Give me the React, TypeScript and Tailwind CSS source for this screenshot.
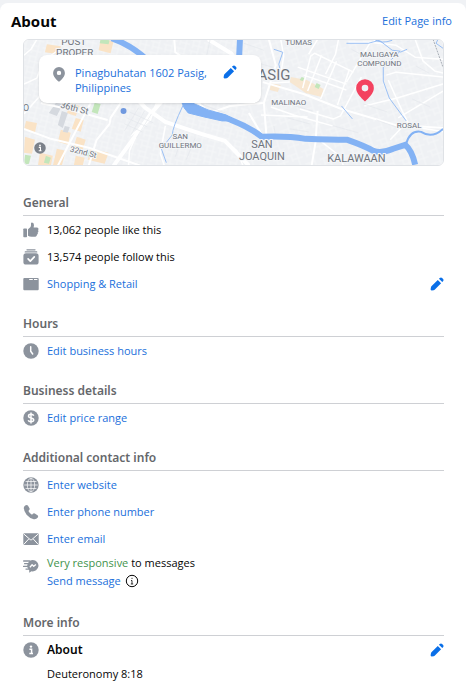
import React from 'react';

// --- Icons ---
interface IconProps {
    className?: string;
}

const PencilIcon: React.FC<IconProps> = ({ className }) => (
    <svg viewBox="0 0 16 16" className={className} fill="currentColor" aria-hidden="true">
        <path d="M8.900 3.300 12.700 7.100 5.600 14.200Q5 14.800 4.200 15L2 15.400Q.6 15.500.7 14.100L1.100 11.800Q1.300 11 1.900 10.400Z" />
        <path d="M10.200 2 11.200 1.100Q12.600-.1 13.900 1.200L14.900 2.200Q16.100 3.500 14.900 4.900L14 5.800Z" />
    </svg>
);

const PinIcon: React.FC<IconProps> = ({ className }) => (
    <svg viewBox="0 0 12 15" className={className} fill="currentColor" aria-hidden="true">
        <path fillRule="evenodd" d="M6 0a5.9 5.9 0 0 0-5.9 5.9C.1 9.4 3.200 12.300 6 14.800 8.800 12.300 11.900 9.400 11.900 5.900A5.900 5.900 0 0 0 6 0Zm0 3.700a2.200 2.200 0 1 1 0 4.400 2.200 2.200 0 0 1 0-4.400Z" />
    </svg>
);

const InfoIcon: React.FC<IconProps> = ({ className }) => (
    <svg viewBox="0 0 16 16" className={className} aria-hidden="true">
        <circle cx="8" cy="8" r="7.700" fill="currentColor" />
        <circle cx="8" cy="4.600" r="1.200" fill="#fff" />
        <path d="M6.400 7.200h2.200v4.200M6.300 11.600h3.700" fill="none" stroke="#fff" strokeWidth="1.500" />
    </svg>
);

const InfoOutlineIcon: React.FC<IconProps> = ({ className }) => (
    <svg viewBox="0 0 14 14" className={className} fill="none" stroke="currentColor" aria-hidden="true">
        <circle cx="7" cy="7" r="5.700" strokeWidth="1" />
        <path d="M7 3.800v1.200M6 6.500h1v3.500M5.800 10h2.400" strokeWidth=".8" />
    </svg>
);

const LikeIcon: React.FC<IconProps> = ({ className }) => (
    <svg viewBox="0 0 16 16" className={className} fill="currentColor" aria-hidden="true">
        <path d="M1 6.500h2.300q.7 0 .7.700v7.300q0 .7-.7.700H1q-.7 0-.7-.7V7.200q0-.7.700-.7Z" />
        <path d="M5 7.300 7.300 5.200Q8 4.500 8 3.300V1.600Q8 .6 9 .6 11 .8 11 3.200L10.600 5.400H14q1.500.1 1.500 1.500 0 .8-.6 1.200.6.500.5 1.300-.1.800-.8 1.200.4.500.2 1.200-.2.700-.9 1 .2 1.700-1.500 1.900H8.500Q6.500 14.600 5 13.700Z" />
    </svg>
);

const FollowIcon: React.FC<IconProps> = ({ className }) => (
    <svg viewBox="0 0 16 16" className={className} aria-hidden="true">
        <path d="M4 .8h8M2.300 2.900h11.400" stroke="currentColor" strokeWidth="1.300" strokeLinecap="round" />
        <rect x=".4" y="4.300" width="15.200" height="11.300" rx="2.600" fill="currentColor" />
        <path d="m5.100 9.900 2.200 2.200 4-4.200" fill="none" stroke="#fff" strokeWidth="1.700" strokeLinecap="round" strokeLinejoin="round" />
    </svg>
);

const CategoryIcon: React.FC<IconProps> = ({ className }) => (
    <svg viewBox="0 0 16 16" className={className} aria-hidden="true">
        <rect x=".3" y="1.900" width="15.400" height="12.400" rx="1" fill="currentColor" />
        <path d="M6.200 3.500h3.600M11 3.500h3.400" stroke="#fff" strokeWidth="1" />
    </svg>
);

const ClockIcon: React.FC<IconProps> = ({ className }) => (
    <svg viewBox="0 0 16 16" className={className} aria-hidden="true">
        <circle cx="8" cy="8" r="7.700" fill="currentColor" />
        <path d="M7.700 3.800v4.400l2 2.800" fill="none" stroke="#fff" strokeWidth="1.500" strokeLinecap="round" />
    </svg>
);

const DollarIcon: React.FC<IconProps> = ({ className }) => (
    <svg viewBox="0 0 16 16" className={className} aria-hidden="true">
        <circle cx="8" cy="8" r="7.700" fill="currentColor" />
        <path d="M10.700 5.700Q10.300 4.300 8 4.300 5.500 4.300 5.500 6 5.500 7.500 8 8q2.700.5 2.700 2.100 0 1.700-2.700 1.700-2.300 0-2.800-1.500M8 2.600v10.900" fill="none" stroke="#fff" strokeWidth="1.500" />
    </svg>
);

const GlobeIcon: React.FC<IconProps> = ({ className }) => (
    <svg viewBox="0 0 16 16" className={className} aria-hidden="true">
        <circle cx="8" cy="8" r="7.700" fill="currentColor" />
        <g fill="none" stroke="#fff" strokeWidth=".7">
            <path d="M8 1.200v13.600M1.200 8h13.600M2.600 4.500h10.800M2.600 11.500h10.800" />
            <ellipse cx="8" cy="8" rx="3.700" ry="6.800" />
        </g>
    </svg>
);

const PhoneIcon: React.FC<IconProps> = ({ className }) => (
    <svg viewBox="0 0 16 16" className={className} fill="currentColor" aria-hidden="true">
        <path d="M2.200 1.500Q3.800.4 4.900 1.600L6.500 4.300Q7 5.300 6.200 6.100L5.400 7Q6.600 9.500 9 10.700L9.900 9.800Q10.800 9 11.800 9.600L14.500 11.200Q15.600 12.200 14.800 13.500 13.200 15.700 10.700 15.200 6.700 14.200 3.600 10.700.7 6.900.8 3.700 1 2.300 2.200 1.500Z" />
    </svg>
);

const MailIcon: React.FC<IconProps> = ({ className }) => (
    <svg viewBox="0 0 16 16" className={className} aria-hidden="true">
        <rect x=".3" y="2.300" width="15.400" height="11.600" rx="1.200" fill="currentColor" />
        <path d="m.8 3 6.400 5.600q.8.700 1.600 0L15.200 3M.8 13.400l5-5.500M15.200 13.400l-5-5.500" fill="none" stroke="#fff" strokeWidth="1" />
    </svg>
);

const ResponsiveIcon: React.FC<IconProps> = ({ className }) => (
    <svg viewBox="0 0 16 16" className={className} aria-hidden="true">
        <path d="M9.800 2a5.900 5.700 0 1 1-1.300 11.300L6.200 14.700v-2.600A5.900 5.700 0 0 1 5 5.200Q6.500 2 9.800 2Z" fill="currentColor" />
        <path d="M.6 3h6M1.600 5.700h4M.6 8.400h4.200M3 11.100h3" stroke="currentColor" strokeWidth="1.300" strokeLinecap="round" />
        <path d="m6.900 9.200 2.200-2.400 1.600 1.500 2.200-1.900" fill="none" stroke="#fff" strokeWidth="1.300" strokeLinejoin="round" />
    </svg>
);

// --- Map of the neighbourhood ---
const LocationMap: React.FC = () => (
    <svg viewBox="23 39 421 127" preserveAspectRatio="xMidYMid slice" className="absolute inset-0 h-full w-full" role="img" aria-label="Map of Pinagbuhatan, Pasig">
        <defs>
            <pattern id="streets" width="13" height="11" patternUnits="userSpaceOnUse" patternTransform="rotate(14)">
                <path d="M0 3h9M9 0v11M3 3v8M3 8h10" stroke="#f6f7f9" strokeWidth=".8" fill="none" />
            </pattern>
            <pattern id="streetsEast" width="15" height="13" patternUnits="userSpaceOnUse" patternTransform="rotate(-18)">
                <path d="M0 4h10M10 0v13M4 4v7M4 9h11" stroke="#f6f7f9" strokeWidth=".8" fill="none" />
            </pattern>
        </defs>
        <rect x="23" y="39" width="421" height="127" fill="#eff1f4" />
        <rect x="23" y="39" width="225" height="127" fill="url(#streets)" />
        <rect x="248" y="39" width="196" height="127" fill="url(#streetsEast)" />

        {/* commercial blocks */}
        <g fill="#fae3c6">
            <path d="m100 39 13 2-3 12-12-3ZM46 44l14 2-2 8-14-2ZM25 121l11 2-2 10-11-3ZM24 137l10 3-3 14-8-1ZM70 103l9 3-4 10-9-3ZM75 118l8 2-3 12-9-3ZM60 130l10 3-3 12-10-3ZM76 137l9 3-4 13-9-3ZM39 153l13 3-2 10H37ZM56 149l9 2-4 15h-9ZM75 156l9 2-2 8h-9ZM90 149l18 4-4 11-17-4Z" />
            <path d="m291 77 16 3 17 9-2 8-16-4-16-11ZM271 83l10 2-3 7-8-2Z" opacity=".75" />
        </g>
        <g fill="#c3e6bb">
            <path d="m94 103 6 1-3 10-6-2ZM100 39l9 1-1 4-9-1ZM24 155l6 1-2 8-5 1ZM45 156l5 2-2 6-5-1ZM89 151l5 2-3 5-5-2ZM317 83l4 2-2 4-4-2ZM302 77l3 1-2 3-3-1Z" />
        </g>
        <path d="m55 103 7 1-6 12-8-3ZM61 111l6 2-5 15-5-3ZM64 126l5 1-2 6-5-1Z" fill="#d5d9df" />

        {/* streets */}
        <g fill="none" stroke="#fff" strokeLinejoin="round">
            <g strokeWidth="2">
                <path d="M23 129 50 139 88 148 140 166M40 103 71 110 107 120M90 103 72 137 57 166M120 103 110 118 109 124 96 140 88 166M174 39 175 52 184 58" />
                <path d="M132 94 145 108 165 122 201 134 225 141 249 166M168 94 151 113 140 129 113 166M208 39 231 53 240 65" strokeWidth="4" />
                <path d="M183 90 210 113 230 106 263 103M249 113 262 135M263 82 304 94 342 109 396 125 444 128" />
                <path d="M269 39 276 65 264 103 267 141M318 111 316 142 312 166" />
            </g>
            <g strokeWidth="1.500">
                <path d="M303 88 311 56 315 53 354 72M304 75 347 90M298 67 347 84M322 55 308 91M337 61 321 99M350 69 338 105M362 77 341 116 334 119 300 109" />
                <path d="M309 54 318 39M339 39 336 54 326 74M281 39 284 56 280 79M349 42 374 42 376 39M347 82 371 42 397 45 416 57 444 59" />
                <path d="M387 75 397 72 444 77M365 106 398 98 444 84M399 118 444 91M391 140 405 125 444 132" />
                <path d="M416 39 424 61 436 71 444 73M389 80 403 111 409 123M270 83 290 82M271 107 294 115 333 126M261 115 308 117M322 142 340 156 344 166M225 141 237 151 243 166" />
                <path d="M23 84 36 78 42 61 56 51 77 49M23 114 39 96M36 39 30 49 23 55M136 135 129 151 128 166M165 126 160 154 164 166M156 103 150 120 130 136" />
            </g>
        </g>
        <g fill="none" stroke="#e3e6ea" strokeWidth=".6">
            <path d="M129 112l24 11M126 118l21 9M124 124l18 8M144 111l-14 25M151 114l-15 24M138 108l-14 23M183 135l-8 22M195 138l-9 22M201 104l24 9M210 39l-4 19M244 43l20 7M251 61l22 6M282 102l31 9M288 118l22 6M334 126l25 7M364 104l24 8M377 120l22 8M413 99l18 8M417 66l13 7M352 49l13 7M290 129l19 3M274 126l2 11" />
        </g>
        <path d="M434 39 444 67" fill="none" stroke="#8b929b" strokeWidth=".7" strokeDasharray="2 1" />

        {/* river and creeks */}
        <g fill="none" stroke="#83b2f4">
            <path d="M111 38Q131 45 147 60 161 74 168 93M240 39 239 60Q236 83 240 94M204 114Q221 115 231 120 249 127 262 137 287 136 306 139 331 140 348 140 365 146 374 151 382 154 394 149L406 145Q413 151 416 165" strokeWidth="6" />
            <path d="M181 101 190 102 208 110 226 115 236 121 222 121 204 117 188 113 184 108Z" fill="#83b2f4" />
            <path d="M407 144Q411 130 422 132 433 139 444 129" strokeWidth="2" />
            <path d="M183 105Q172 128 172 135L161 149 166 163M274 49l9 3-4 12 1 4M375 39q7 5 18 1M347 43 369 43 380 40 393 50 401 51 384 67 384 81 390 98 407 121M401 52 408 49M439 39l-2 4 7 5M342 106l11 13" strokeWidth=".8" />
        </g>
        <circle cx="123" cy="111" r="3" fill="#7099df" />

        {/* place labels */}
        <g fontFamily="Roboto, sans-serif" fill="#6f747d" textAnchor="middle" stroke="#f4f6f8" strokeWidth="2" paintOrder="stroke">
            <text x="73" y="45" fontSize="10">POST</text>
            <text x="74" y="56" fontSize="10">PROPER</text>
            <g fontSize="9">
                <text x="25" y="111">O</text>
                <text x="73" y="111" transform="rotate(14 73 111)">36th St</text>
            </g>
            <text x="82" y="155" fontSize="8" transform="rotate(14 82 155)">32nd St</text>
            <g fontSize="8">
                <text x="299" y="45">TUMAS</text>
                <text x="380" y="57">MALIGAYA</text>
                <text x="380" y="66">COMPOUND</text>
                <text x="289" y="105">MALINAO</text>
                <text x="180" y="139">SAN</text>
                <text x="180" y="148">GUILLERMO</text>
                <text x="410" y="128">ROSAL</text>
            </g>
            <g fontSize="11">
                <text x="262" y="148">SAN</text>
                <text x="262" y="160">JOAQUIN</text>
                <text x="357" y="162">KALAWAAN</text>
            </g>
            <text x="270" y="80" fontSize="15">PASIG</text>
        </g>
    </svg>
);

// --- Section of the about card ---
interface SectionProps {
    title: string;
    children: React.ReactNode;
}

const Section: React.FC<SectionProps> = ({ title, children }) => (
    <section className="mb-4">
        <h3 className="h-6 border-b border-[#ced0d4] font-['Noto_Sans',sans-serif] text-[12px] leading-[22px] font-semibold text-[#65676b]">{title}</h3>
        {children}
    </section>
);

interface RowProps {
    icon: React.ReactNode;
    action?: React.ReactNode;
    children: React.ReactNode;
}

const Row: React.FC<RowProps> = ({ icon, action, children }) => (
    <div className="flex h-[27px] items-center gap-2">
        <span className="w-4 shrink-0 text-[#8c939d]">{icon}</span>
        <div className="grow">{children}</div>
        {action}
    </div>
);

const linkClass = 'text-[#216fdb] hover:underline';

const EditButton: React.FC<{ label: string }> = ({ label }) => (
    <button type="button" aria-label={label} className="shrink-0 cursor-pointer text-[#0a6fe8]">
        <PencilIcon className="h-3.5 w-3.5" />
    </button>
);

const App: React.FC = () => {
    return (
        <div className="min-h-screen bg-[#f0f2f5] pt-[3px] font-['Open_Sans','Noto_Sans',sans-serif] text-[11px] leading-[18px] text-[#050505]">
            <main className="min-h-[690px] rounded-t-lg bg-white">
                <header className="flex h-9 items-center justify-between pr-3.5 pl-[11px]">
                    <h2 className="text-[15px] font-bold">About</h2>
                    <a href="#page-info" className={linkClass}>Edit Page info</a>
                </header>

                <div className="pr-[22px] pl-[23px]">
                    <div className="relative mb-[26px] h-[127px] overflow-hidden rounded-md border border-[#dfe2e6] p-[15px]">
                        <LocationMap />
                        <div className="relative flex h-12 w-[222px] items-start rounded-lg bg-white pt-[10px] pr-6 pl-[14px] shadow">
                            <PinIcon className="mt-0.5 h-[15px] w-3 shrink-0 text-[#8c939d]" />
                            <a href="#address" className="ml-2.5 grow leading-[15px] text-[#216fdb]">Pinagbuhatan 1602 Pasig, Philippines</a>
                            <EditButton label="Edit address" />
                        </div>
                        <PinIcon className="absolute top-[39px] right-[69px] h-[23px] w-[18px] text-[#f3425f]" />
                        <InfoIcon className="absolute bottom-[11px] left-2.5 h-3 w-3 text-[#7b818a]" />
                    </div>

                    <Section title="General">
                        <Row icon={<LikeIcon className="h-4 w-4" />}>13,062 people like this</Row>
                        <Row icon={<FollowIcon className="h-4 w-4" />}>13,574 people follow this</Row>
                        <Row icon={<CategoryIcon className="h-4 w-4" />} action={<EditButton label="Edit category" />}>
                            <a href="#category" className={linkClass}>Shopping &amp; Retail</a>
                        </Row>
                    </Section>

                    <Section title="Hours">
                        <Row icon={<ClockIcon className="h-4 w-4" />}>
                            <a href="#hours" className={linkClass}>Edit business hours</a>
                        </Row>
                    </Section>

                    <Section title="Business details">
                        <Row icon={<DollarIcon className="h-4 w-4" />}>
                            <a href="#price" className={linkClass}>Edit price range</a>
                        </Row>
                    </Section>

                    <Section title="Additional contact info">
                        <Row icon={<GlobeIcon className="h-4 w-4" />}>
                            <a href="#website" className={linkClass}>Enter website</a>
                        </Row>
                        <Row icon={<PhoneIcon className="h-4 w-4" />}>
                            <a href="#phone" className={linkClass}>Enter phone number</a>
                        </Row>
                        <Row icon={<MailIcon className="h-4 w-4" />}>
                            <a href="#email" className={linkClass}>Enter email</a>
                        </Row>
                        <div className="flex items-start gap-2 pt-0.5 pb-1.5">
                            <ResponsiveIcon className="mt-1 h-4 w-4 shrink-0 text-[#8c939d]" />
                            <div>
                                <p><span className="text-[#42934d]">Very responsive</span> to messages</p>
                                <p className="flex items-center gap-1">
                                    <a href="#message" className={linkClass}>Send message</a>
                                    <InfoOutlineIcon className="h-3.5 w-3.5" />
                                </p>
                            </div>
                        </div>
                    </Section>

                    <Section title="More info">
                        <Row icon={<InfoIcon className="h-4 w-4" />} action={<EditButton label="Edit about" />}>
                            <h4 className="font-['Noto_Sans',sans-serif] text-[12px] font-semibold">About</h4>
                        </Row>
                        <p className="pt-0.5 pl-6">Deuteronomy 8:18</p>
                    </Section>
                </div>
            </main>
        </div>
    );
};

export default App;
